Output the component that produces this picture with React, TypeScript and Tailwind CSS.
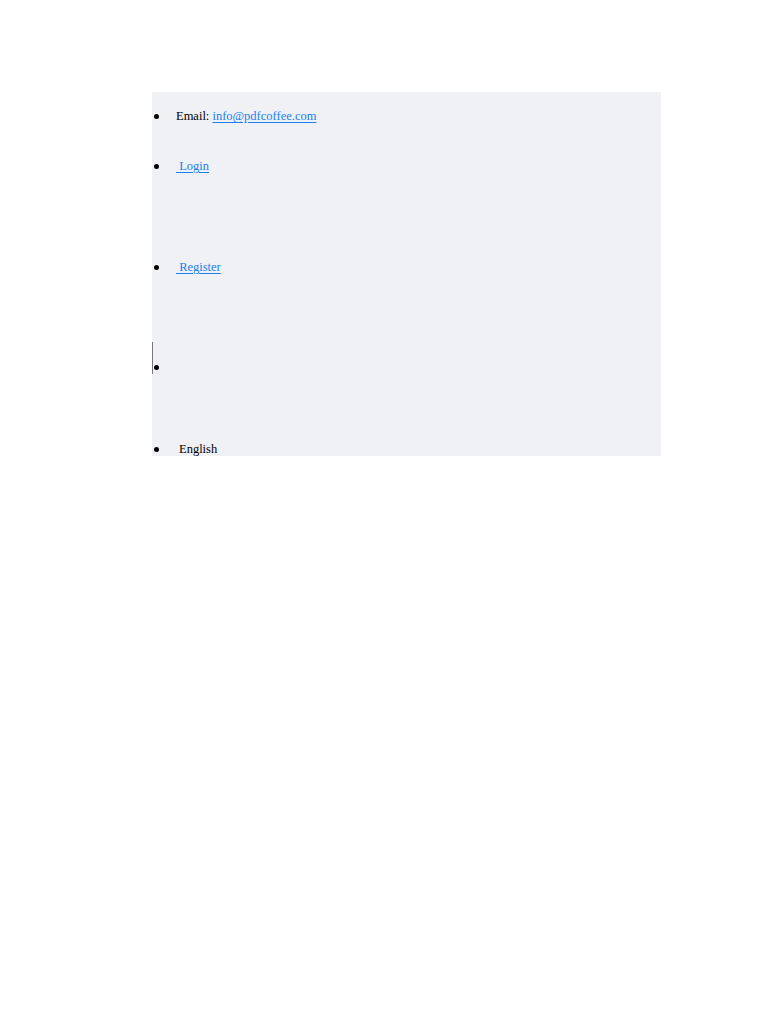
import React from "react";

function Bullet() {
  return <span className="block w-[5px] h-[5px] rounded-full bg-black shrink-0" />;
}

export default function App() {
  const link = "text-[#1a7ff0] underline underline-offset-2";
  return (
    <div className="min-h-[1024px] bg-white pt-[92px] pl-[152px]" style={{ fontFamily: '"Liberation Serif", "Times New Roman", serif' }}>
      <ul className="w-[509px] h-[364px] bg-[#f0f1f5] overflow-hidden text-[12.5px] leading-[16px] text-black">
        <li className="mt-[16px] flex items-center h-[16px]">
          <span className="ml-[2px]"><Bullet /></span>
          <span className="ml-[17px]">Email: <a className={link}>info@pdfcoffee.com</a></span>
        </li>
        <li className="mt-[34px] flex items-center h-[16px]">
          <span className="ml-[2px]"><Bullet /></span>
          <a className={`ml-[17px] ${link}`}>&nbsp;Login</a>
        </li>
        <li className="mt-[85px] flex items-center h-[16px]">
          <span className="ml-[2px]"><Bullet /></span>
          <a className={`ml-[17px] ${link}`}>&nbsp;Register</a>
        </li>
        <li className="mt-[84px] flex items-center h-[16px] relative">
          <span className="absolute left-0 top-[-17px] w-[1px] h-[32px] bg-[#777]" />
          <span className="ml-[2px]"><Bullet /></span>
        </li>
        <li className="mt-[66px] flex items-center h-[16px]">
          <span className="ml-[2px]"><Bullet /></span>
          <span className="ml-[20px]">English</span>
        </li>
      </ul>
    </div>
  );
}
